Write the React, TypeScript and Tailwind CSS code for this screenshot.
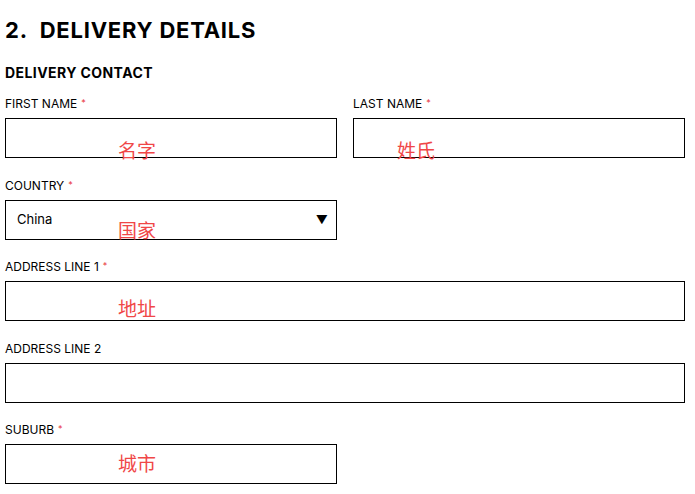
import type { ReactNode } from 'react';

const font = { fontFamily: 'Inter, "Noto Sans", sans-serif' };

function Label({ children, required }: { children: ReactNode; required?: boolean }) {
  return (
    <div className="mb-[6px] h-4 text-[12px] leading-4 text-black">
      {children}
      {required && <span className="relative top-[-2px] ml-[4px] text-[9px] text-[#e8353b]">*</span>}
    </div>
  );
}

function Note({ text, pos }: { text: string; pos: string }) {
  return (
    <span
      className={`pointer-events-none absolute ${pos} text-[19px] leading-none text-[#f04747]`}
      style={{ fontFamily: '"Noto Sans CJK SC", sans-serif' }}
    >
      {text}
    </span>
  );
}

function Field({
  label,
  required,
  note,
  notePos = 'left-[112px] top-[21px]',
  children,
}: {
  label: string;
  required?: boolean;
  note?: string;
  notePos?: string;
  children?: ReactNode;
}) {
  return (
    <div>
      <Label required={required}>{label}</Label>
      <div className="relative h-10 border border-black bg-white">
        {children}
        {note && <Note text={note} pos={notePos} />}
      </div>
    </div>
  );
}

export default function App() {
  return (
    <div className="min-h-screen bg-white pl-[5px] pt-[18px]" style={font}>
      <div className="w-[680px]">
        <h2 className="text-[22px] font-bold leading-[24px] tracking-[0.035em] text-black">
          2.&nbsp; DELIVERY DETAILS
        </h2>
        <h3 className="mt-[23px] text-[14px] font-bold leading-4 tracking-[0.03em] text-black">
          DELIVERY CONTACT
        </h3>
        <div className="mt-[15px] flex flex-col gap-[19.5px]">
          <div className="grid grid-cols-2 gap-4">
            <Field label="FIRST NAME" required note="名字" />
            <Field label="LAST NAME" required note="姓氏" notePos="left-[43px] top-[21px]" />
          </div>
          <div className="grid grid-cols-2 gap-4">
            <Field label="COUNTRY" required note="国家" notePos="left-[112px] top-[19px]">
              <div className="flex h-full items-center justify-between pl-[11px] pr-[8px] text-[13px]">
                <span>China</span>
                <span className="text-[12px]">▼</span>
              </div>
            </Field>
          </div>
          <Field label="ADDRESS LINE 1" required note="地址" notePos="left-[112px] top-[16px]" />
          <Field label="ADDRESS LINE 2" />
          <div className="grid grid-cols-2 gap-4">
            <Field label="SUBURB" required note="城市" notePos="left-[112px] top-[8px]" />
          </div>
        </div>
      </div>
    </div>
  );
}
